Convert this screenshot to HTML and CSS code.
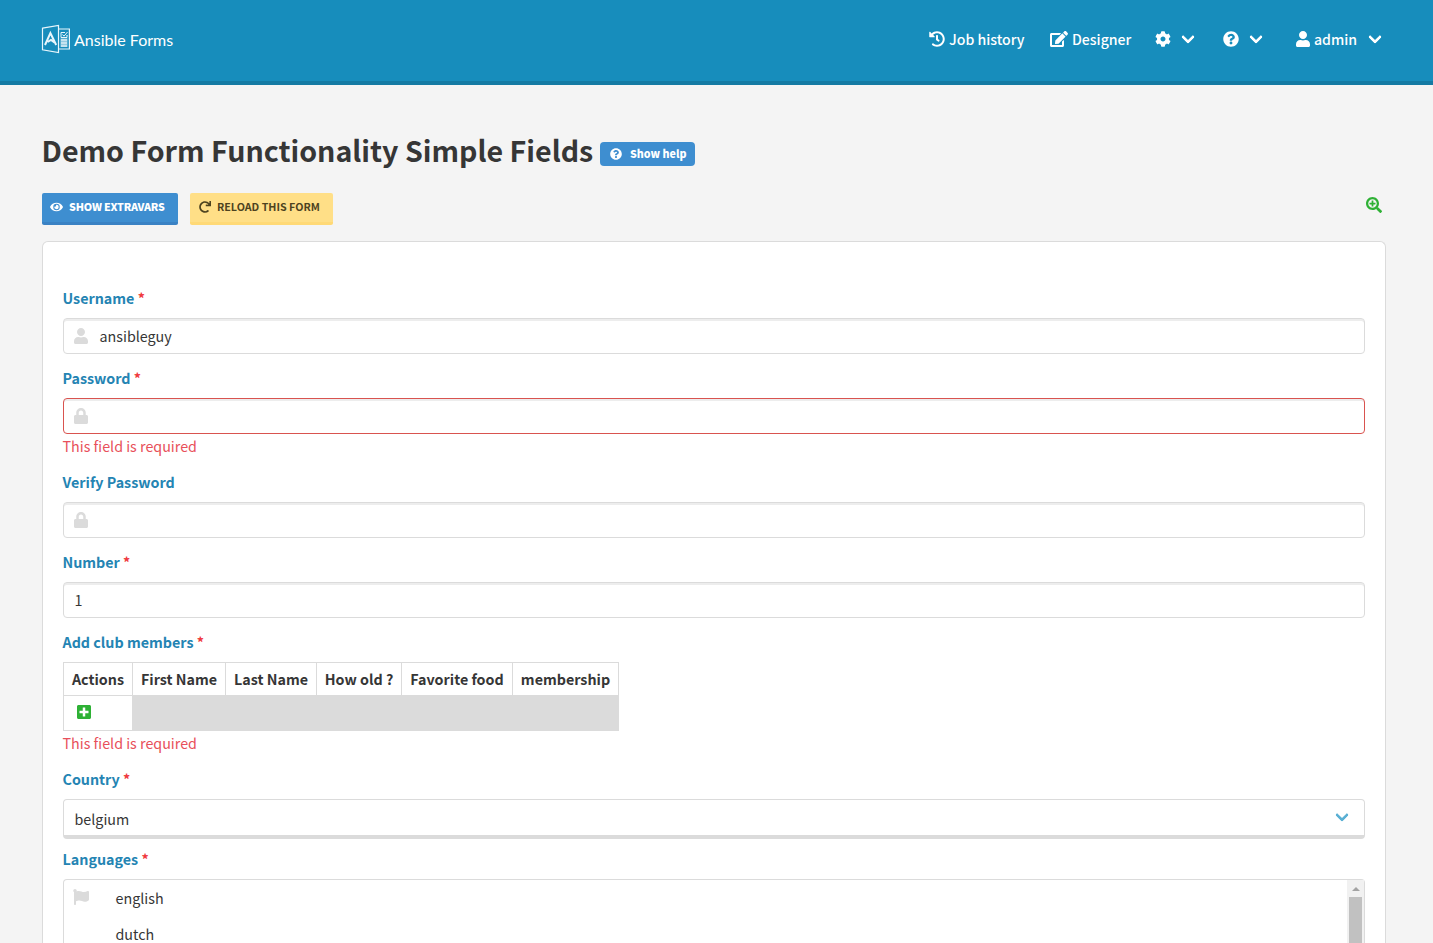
FILE: index.html
```html
<!DOCTYPE html>
<html lang="en">
<head>
<meta charset="utf-8">
<title>Ansible Forms</title>
<link rel="stylesheet" href="styles.css">
</head>
<body>
<svg class="sprite" aria-hidden="true">
<symbol id="user" viewBox="0 0 448 512"><path d="M224 256c70.7 0 128-57.3 128-128S294.7 0 224 0 96 57.3 96 128s57.3 128 128 128zm89.6 32h-16.7c-22.2 10.2-46.9 16-72.9 16s-50.6-5.8-72.9-16h-16.7C60.2 288 0 348.2 0 422.4V464c0 26.5 21.5 48 48 48h352c26.5 0 48-21.5 48-48v-41.6c0-74.2-60.2-134.4-134.4-134.4z"/></symbol>
<symbol id="lock" viewBox="0 0 448 512"><path d="M400 224h-24v-72C376 68.2 307.8 0 224 0S72 68.2 72 152v72H48c-26.5 0-48 21.5-48 48v192c0 26.5 21.5 48 48 48h352c26.5 0 48-21.5 48-48V272c0-26.5-21.5-48-48-48zm-104 0H152v-72c0-39.7 32.3-72 72-72s72 32.3 72 72v72z"/></symbol>
<symbol id="plus-square" viewBox="0 0 448 512"><path d="M400 32H48C21.5 32 0 53.5 0 80v352c0 26.5 21.5 48 48 48h352c26.5 0 48-21.5 48-48V80c0-26.5-21.5-48-48-48zm-32 252c0 6.6-5.4 12-12 12h-92v92c0 6.6-5.4 12-12 12h-56c-6.6 0-12-5.4-12-12v-92H92c-6.6 0-12-5.4-12-12v-56c0-6.6 5.4-12 12-12h92v-92c0-6.6 5.4-12 12-12h56c6.6 0 12 5.4 12 12v92h92c6.6 0 12 5.4 12 12v56z"/></symbol>
<symbol id="question" viewBox="0 0 512 512"><path d="M504 256c0 136.997-111.043 248-248 248S8 392.997 8 256C8 119.083 119.043 8 256 8s248 111.083 248 248zM262.655 90c-54.497 0-89.255 22.957-116.549 63.758-3.536 5.286-2.353 12.415 2.715 16.258l34.699 26.31c5.205 3.947 12.621 3.008 16.665-2.122 17.864-22.658 30.113-35.797 57.303-35.797 20.429 0 45.698 13.148 45.698 32.958 0 14.976-12.363 22.667-32.534 33.976C247.128 238.528 216 254.941 216 296v4c0 6.627 5.373 12 12 12h56c6.627 0 12-5.373 12-12v-1.333c0-28.462 83.186-29.647 83.186-106.667 0-58.002-60.165-102-116.531-102zM256 338c-25.365 0-46 20.635-46 46 0 25.364 20.635 46 46 46s46-20.636 46-46c0-25.365-20.635-46-46-46z"/></symbol>
<symbol id="cog" viewBox="0 0 512 512"><path d="M487.4 315.7l-42.6-24.6c4.3-23.2 4.3-47 0-70.2l42.6-24.6c4.9-2.8 7.1-8.6 5.5-14-11.1-35.6-30-67.8-54.7-94.6-3.8-4.1-10-5.1-14.8-2.3L380.8 110c-17.9-15.4-38.5-27.3-60.8-35.1V25.8c0-5.6-3.9-10.5-9.4-11.7-36.7-8.2-74.3-7.8-109.2 0-5.5 1.2-9.4 6.1-9.4 11.7V75c-22.2 7.9-42.8 19.8-60.8 35.1L88.7 85.5c-4.9-2.8-11-1.9-14.8 2.3-24.7 26.7-43.6 58.9-54.7 94.6-1.7 5.4.6 11.2 5.5 14L67.3 221c-4.3 23.2-4.3 47 0 70.2l-42.6 24.6c-4.9 2.8-7.1 8.6-5.5 14 11.1 35.6 30 67.8 54.7 94.6 3.8 4.1 10 5.1 14.8 2.3l42.6-24.6c17.9 15.4 38.5 27.3 60.8 35.1v49.2c0 5.6 3.9 10.5 9.4 11.7 36.7 8.2 74.3 7.8 109.2 0 5.5-1.2 9.4-6.1 9.4-11.7v-49.2c22.2-7.9 42.8-19.8 60.8-35.1l42.6 24.6c4.9 2.8 11 1.9 14.8-2.3 24.7-26.7 43.6-58.9 54.7-94.6 1.5-5.5-.7-11.3-5.6-14.1zM256 336c-44.1 0-80-35.9-80-80s35.9-80 80-80 80 35.9 80 80-35.9 80-80 80z"/></symbol>
<symbol id="edit" viewBox="0 0 576 512"><path d="M402.6 83.2l90.2 90.2c3.8 3.8 3.8 10 0 13.8L274.4 405.6l-92.8 10.3c-12.4 1.4-22.9-9.1-21.5-21.5l10.3-92.8L388.8 83.2c3.8-3.8 10-3.8 13.8 0zm162-22.9l-48.8-48.8c-15.2-15.2-39.9-15.2-55.2 0l-35.4 35.4c-3.8 3.8-3.8 10 0 13.8l90.2 90.2c3.8 3.8 10 3.8 13.8 0l35.4-35.4c15.2-15.3 15.2-40 0-55.2zM384 346.2V448H64V128h229.8c3.2 0 6.2-1.3 8.5-3.5l40-40c7.6-7.6 2.2-20.5-8.5-20.5H48C21.5 64 0 85.5 0 112v352c0 26.5 21.5 48 48 48h352c26.5 0 48-21.5 48-48V306.2c0-10.7-12.9-16-20.5-8.5l-40 40c-2.2 2.3-3.5 5.3-3.5 8.5z"/></symbol>
<symbol id="history" viewBox="0 0 512 512"><path d="M504 255.531c.253 136.64-111.18 248.372-247.82 248.468-59.015.042-113.223-20.53-155.822-54.911-11.077-8.94-11.905-25.541-1.839-35.607l11.267-11.267c8.609-8.609 22.353-9.551 31.891-1.984C173.062 425.135 212.781 440 256 440c101.705 0 184-82.311 184-184 0-101.705-82.311-184-184-184-48.814 0-93.149 18.969-126.068 49.932l50.754 50.754c10.08 10.08 2.941 27.314-11.313 27.314H24c-8.837 0-16-7.163-16-16V38.627c0-14.254 17.234-21.393 27.314-11.314l49.372 49.372C129.209 34.136 189.552 8 256 8c136.81 0 247.747 110.78 248 247.531zm-180.912 78.784l9.823-12.63c8.138-10.463 6.253-25.542-4.21-33.679L288 256.349V152c0-13.255-10.745-24-24-24h-16c-13.255 0-24 10.745-24 24v135.651l65.409 50.874c10.463 8.137 25.541 6.253 33.679-4.21z"/></symbol>
<symbol id="eye" viewBox="0 0 576 512"><path d="M572.52 241.4C518.29 135.59 410.93 64 288 64S57.68 135.64 3.48 241.41a32.35 32.35 0 0 0 0 29.19C57.71 376.41 165.07 448 288 448s230.32-71.64 284.52-177.41a32.35 32.35 0 0 0 0-29.19zM288 400a144 144 0 1 1 144-144 143.93 143.93 0 0 1-144 144zm0-240a95.31 95.31 0 0 0-25.31 3.79 47.85 47.85 0 0 1-66.9 66.9A95.78 95.78 0 1 0 288 160z"/></symbol>
<symbol id="redo" viewBox="0 0 512 512"><path d="M500.33 0h-47.41a12 12 0 0 0-12 12.57l4 82.76A247.42 247.42 0 0 0 256 8C119.34 8 7.9 119.53 8 256.19 8.1 393.07 119.1 504 256 504a247.1 247.1 0 0 0 166.18-63.91 12 12 0 0 0 .48-17.43l-34-34a12 12 0 0 0-16.38-.55A176 176 0 1 1 402.1 157.8l-101.53-4.87a12 12 0 0 0-12.57 12v47.41a12 12 0 0 0 12 12h200.33a12 12 0 0 0 12-12V12a12 12 0 0 0-12-12z"/></symbol>
<symbol id="search-plus" viewBox="0 0 512 512"><path d="M304 192v32c0 6.6-5.4 12-12 12h-56v56c0 6.6-5.4 12-12 12h-32c-6.6 0-12-5.4-12-12v-56h-56c-6.6 0-12-5.4-12-12v-32c0-6.6 5.4-12 12-12h56v-56c0-6.6 5.4-12 12-12h32c6.6 0 12 5.4 12 12v56h56c6.6 0 12 5.4 12 12zm201 284.7L476.7 505c-9.4 9.4-24.6 9.4-33.9 0L343 405.3c-4.5-4.5-7-10.6-7-17V372c-35.3 27.6-79.7 44-128 44C93.1 416 0 322.9 0 208S93.1 0 208 0s208 93.1 208 208c0 48.3-16.4 92.7-44 128h16.3c6.4 0 12.5 2.5 17 7l99.7 99.7c9.3 9.4 9.3 24.6 0 34zM344 208c0-75.2-60.8-136-136-136S72 132.8 72 208s60.8 136 136 136 136-60.8 136-136z"/></symbol>
<symbol id="flag" viewBox="0 0 512 512"><path d="M349.565 98.783C295.978 98.783 251.721 64 184.348 64c-24.955 0-47.309 4.384-68.045 12.013a55.947 55.947 0 0 0 3.586-23.562C118.117 24.015 94.806 1.206 66.338.048 34.345-1.254 8 24.296 8 56c0 19.026 9.497 35.825 24 45.945V488c0 13.255 10.745 24 24 24h16c13.255 0 24-10.745 24-24v-94.4c28.311-12.064 63.582-22.122 114.435-22.122 53.588 0 97.844 34.783 165.217 34.783 48.169 0 86.667-16.294 122.505-40.858C506.84 359.452 512 349.571 512 339.045v-243.1c0-23.393-24.269-38.87-45.485-29.016-34.338 15.948-76.454 31.854-116.95 31.854z"/></symbol>
</svg>

<header class="navbar">
  <a class="brand">
    <svg class="brand-mark" viewBox="0 0 30 30">
      <path d="M1.5 4.2 17.5 1.4v27.2L1.5 25.8z"/>
      <path d="M17.5 5H28.4v20H17.5" />
      <path class="mark-a" d="M4 21 9.4 9l5.8 12M6.6 18l3.4-2 3.4 2.4"/>
      <path class="mark-thin" d="M20 8.5h4M26 12v-1M20 8.5v5h6v-2M21.5 10.5l1.5 1.7 3.5-4.2M20 16h6M20 19h6M20 22h6"/>
      <path class="mark-fill" d="M19.5 14.5h7v8.5h-7z"/>
    </svg>
    <span class="brand-name">Ansible Forms</span>
  </a>
  <nav class="menu">
    <a class="menu-item item-history"><svg class="icon"><use href="#history"/></svg><span class="t-history">Job history</span></a>
    <a class="menu-item item-designer"><svg class="icon icon-wide"><use href="#edit"/></svg><span class="t-designer">Designer</span></a>
    <a class="menu-item item-cog"><svg class="icon"><use href="#cog"/></svg><i class="arrow"></i></a>
    <a class="menu-item item-help"><svg class="icon"><use href="#question"/></svg><i class="arrow"></i></a>
    <a class="menu-item item-user"><svg class="icon icon-narrow"><use href="#user"/></svg><span class="t-admin">admin</span><i class="arrow"></i></a>
  </nav>
</header>

<main class="page">
  <div class="title-row">
    <h1 class="title">Demo Form Functionality Simple Fields</h1>
    <a class="tag"><svg class="tag-icon"><use href="#question"/></svg><span>Show help</span></a>
  </div>
  <div class="toolbar">
    <button class="button is-info"><svg class="eye-icon"><use href="#eye"/></svg><span>SHOW EXTRAVARS</span></button>
    <button class="button is-warning"><svg class="redo-icon"><use href="#redo"/></svg><span>RELOAD THIS FORM</span></button>
    <svg class="zoom-icon"><use href="#search-plus"/></svg>
  </div>

  <form class="box">
    <div class="field">
      <div class="label">Username <span class="req">*</span></div>
      <div class="input"><svg class="field-icon"><use href="#user"/></svg><span>ansibleguy</span></div>
    </div>
    <div class="field">
      <div class="label">Password <span class="req">*</span></div>
      <div class="input is-danger"><svg class="field-icon"><use href="#lock"/></svg></div>
      <p class="help">This field is required</p>
    </div>
    <div class="field">
      <div class="label">Verify Password</div>
      <div class="input"><svg class="field-icon"><use href="#lock"/></svg></div>
    </div>
    <div class="field">
      <div class="label">Number <span class="req">*</span></div>
      <div class="input"><span>1</span></div>
    </div>
    <div class="field">
      <div class="label">Add club members <span class="req">*</span></div>
      <table class="table">
        <colgroup><col class="c1"><col class="c2"><col class="c3"><col class="c4"><col class="c5"><col class="c6"></colgroup>
        <tr><th>Actions</th><th>First Name</th><th>Last Name</th><th>How old ?</th><th>Favorite food</th><th>membership</th></tr>
        <tr><td><svg class="plus-icon"><use href="#plus-square"/></svg></td><td class="filler" colspan="5"></td></tr>
      </table>
      <p class="help">This field is required</p>
    </div>
    <div class="field field-select">
      <div class="label">Country <span class="req">*</span></div>
      <div class="select"><span>belgium</span><i class="arrow"></i></div>
    </div>
    <div class="field field-last">
      <div class="label">Languages <span class="req">*</span></div>
      <div class="listbox">
        <svg class="flag-icon"><use href="#flag"/></svg>
        <div class="options"><div class="option">english</div><div class="option option-last">dutch</div></div>
        <div class="scrollbar"><i class="scroll-up"></i><div class="thumb"></div></div>
      </div>
    </div>
  </form>
</main>
</body>
</html>
```
FILE: styles.css
```css
* { box-sizing: border-box; }
body {
  margin: 0;
  height: 943px;
  overflow: hidden;
  background: #f4f4f4;
  color: #363636;
  font-family: "Noto Sans CJK SC", "Noto Sans", sans-serif;
  font-size: 14.3px;
  line-height: 24px;
}
svg { fill: currentColor; display: block; flex: none; }
.sprite { display: none; }

.navbar {
  height: 85px;
  padding: 0 51px 0 42px;
  display: flex;
  justify-content: space-between;
  align-items: flex-start;
  background: #178dbc;
  border-bottom: 4px solid #147aa3;
  color: #fff;
}
.brand { display: flex; align-items: center; height: 78px; }
.brand-mark { width: 30px; height: 30px; margin-left: -1px; fill: none; stroke: #e8f6fc; stroke-width: 1.2; }
.mark-a { stroke-width: 2; }
.mark-thin { stroke-width: 1; }
.mark-fill { fill: #fff; stroke: none; opacity: .55; }
.brand-name { font-family: Lato, sans-serif; font-size: 16px; margin-left: 3px; padding-top: 1px; white-space: nowrap; }

.menu { display: flex; height: 78px; align-items: center; white-space: nowrap; font-size: 14.1px; font-weight: 500; }
.menu-item { display: flex; align-items: center; }
.icon { width: 16px; height: 16px; }
.icon-wide { width: 18px; }
.icon-narrow { width: 14px; }
.menu-item span { margin-left: 4px; }
.t-history { width: 75px; }
.t-designer { width: 60px; }
.t-admin { width: 44px; }
.item-designer { margin-left: 26px; }
.item-cog { margin-left: 23px; }
.item-help { margin-left: 28px; }
.item-user { margin-left: 33px; }
.arrow {
  width: 10px; height: 10px;
  border: 3px solid currentColor;
  border-top: 0; border-right: 0; border-radius: 2px;
  transform: translateY(-2px) rotate(-45deg);
}
.menu .arrow { margin: 0 2px 0 12px; }

.page { padding: 43px 47px 0 42px; }
.title-row { display: flex; align-items: flex-start; height: 65px; }
.title { margin: 4px 7px 0 0; width: 551px; font-size: 28.6px; line-height: 36px; font-weight: 700; text-indent: -0.5px; white-space: nowrap; }
.tag {
  display: flex; align-items: center;
  width: 95px; height: 24px; margin-top: 14px; padding-left: 10px;
  border-radius: 4px; background: #3e8ed0; color: #fff;
  font-size: 10.7px; font-weight: 900; white-space: nowrap;
}
.tag-icon { width: 12px; height: 12px; margin-right: 8px; }
.toolbar { display: flex; height: 48px; }
.button {
  display: flex; align-items: center;
  height: 32px; padding: 0 0 2px 8px; margin: 0 12px 0 0;
  border: 0; border-radius: 2px; border-bottom: 3px solid #3a82c4;
  background: #3e8ed0; color: #fff;
  font-family: inherit; font-size: 10.7px; font-weight: 700; white-space: nowrap;
}
.is-info { width: 136px; font-weight: 900; letter-spacing: -0.2px; }
.is-warning { width: 143px; padding-left: 9px; background: #ffdf87; border-bottom-color: #ffd976; color: #4d431f; }
.eye-icon { width: 13px; height: 12px; margin-right: 6px; }
.redo-icon { width: 12px; height: 12px; margin-right: 6px; }
.zoom-icon { width: 16px; height: 16px; margin: 4px 4px 0 auto; color: #2eb135; }

.box {
  width: 1344px; height: 702px; padding: 44px 20px 0;
  border: 1px solid #dbdbdb; border-bottom: 0; border-radius: 6px 6px 0 0; background: #fff;
}
.field { margin-bottom: 12px; }
.label { height: 24px; margin-bottom: 8px; color: #2484b3; font-weight: 700; text-indent: -0.5px; }
.req { color: #f03a3e; }
.input {
  display: flex; align-items: center;
  height: 36px; padding: 0 10.5px;
  border: 1px solid #dbdbdb; border-radius: 4px;
  box-shadow: inset 0 2px 0 #ededed;
}
.is-danger { border-color: #d9534f; }
.field-icon { width: 14px; height: 16px; margin: 0 11.5px 0 -0.5px; color: #dbdbdb; }
.help { height: 24px; margin: 0; color: #e8505b; text-indent: -0.5px; }

.table { width: 556px; table-layout: fixed; border-collapse: collapse; }
.c1 { width: 69px; } .c2 { width: 93px; } .c3 { width: 91px; }
.c4 { width: 85px; } .c5 { width: 111px; } .c6 { width: 106px; }
.table th, .table td { border: 1px solid #dbdbdb; padding: 0; }
.table th { height: 33px; text-align: center; white-space: nowrap; }
.table td { height: 35px; padding-left: 13px; }
.table .filler { background: #dbdbdb; }
.plus-icon { width: 14px; height: 16px; margin-bottom: 3px; color: #2eb135; }

.field-select { margin-bottom: 8px; }
.select {
  display: flex; align-items: center; justify-content: space-between;
  height: 40px; padding: 3px 17px 0 10.5px;
  border: 1px solid #dbdbdb; border-bottom-width: 4px; border-radius: 4px;
}
.select .arrow { color: #5bb0d4; transform: translateY(-4px) rotate(-45deg); }

.field-last { margin-bottom: 0; }
.listbox { display: flex; height: 64px; border: 1px solid #dbdbdb; border-bottom: 0; border-radius: 4px 4px 0 0; }
.flag-icon { width: 16px; height: 16px; margin: 9px 26.5px 0 9px; color: #dbdbdb; }
.options { flex: 1; }
.option { height: 36px; line-height: 36px; }
.option-last { height: 27px; }
.scrollbar { display: flex; flex-direction: column; align-items: center; width: 17px; background: #f1f1f1; }
.scroll-up { margin: 7px 0 6px; border: 4px solid transparent; border-top: 0; border-bottom-color: #a3a3a3; }
.thumb { width: 13px; flex: 1; background: #c1c1c1; }
```
